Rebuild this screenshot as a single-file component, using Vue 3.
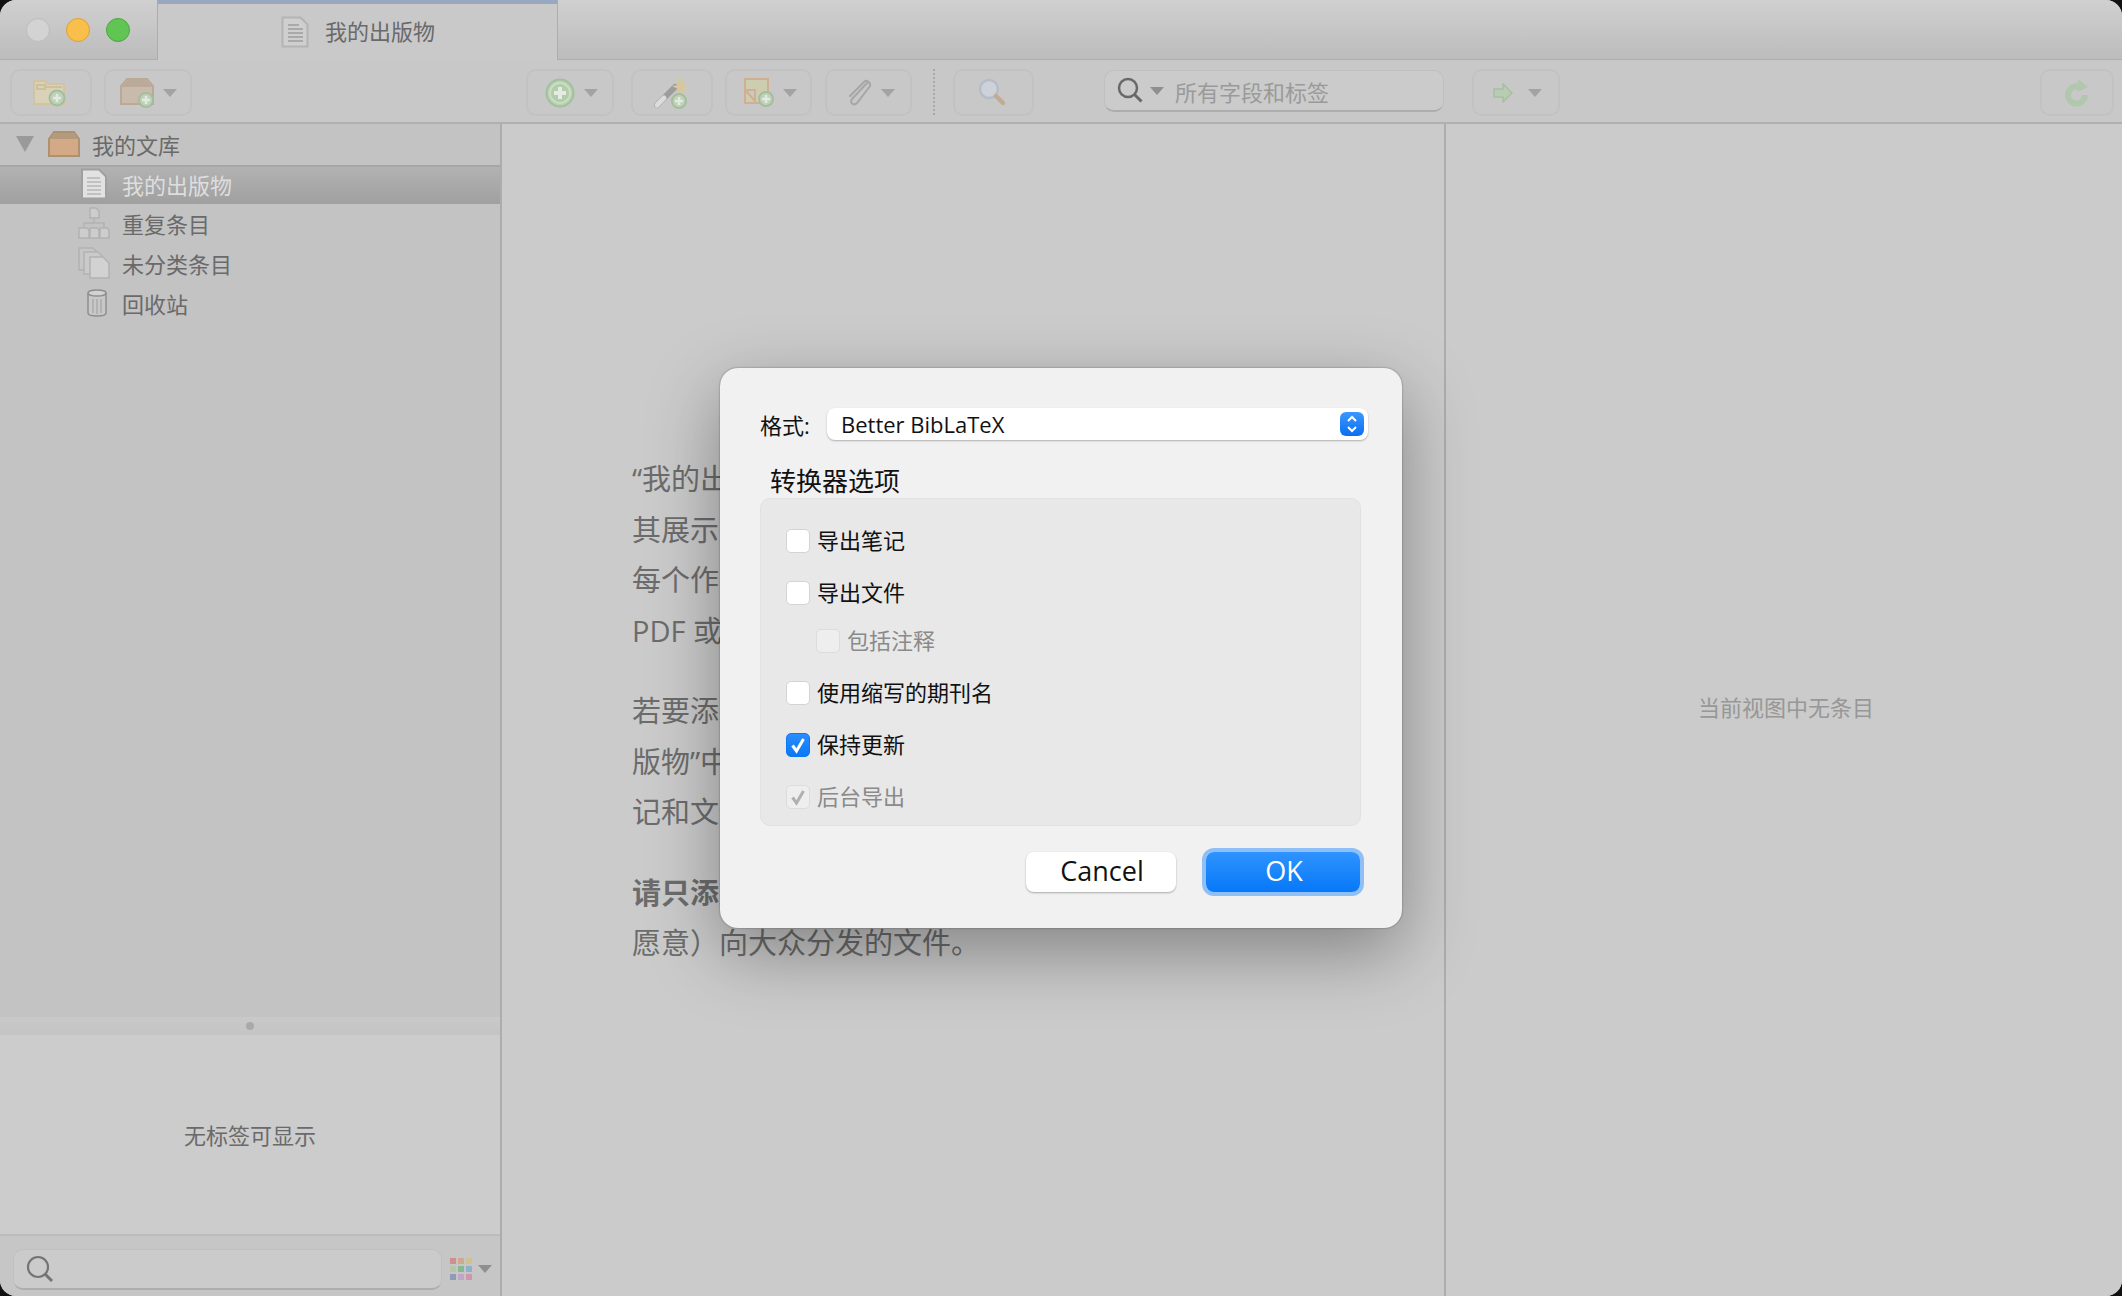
<template>
  <div class="window">
    <!-- 标题栏 -->
    <div class="titlebar">
      <div class="lights">
        <span class="light gray"></span>
        <span class="light yellow"></span>
        <span class="light green"></span>
      </div>
      <div class="tab">
        <svg class="tab-icon" width="28" height="32" viewBox="0 0 28 32">
          <path d="M1.5 1.5h18l7 7v22h-25z" fill="#cfcfcf" stroke="#b4b4b4" stroke-width="2" />
          <path d="M7 9h11M7 13h15M7 17h15M7 21h15M7 25h15" stroke="#a9a9a9" stroke-width="2" />
        </svg>
        <span>我的出版物</span>
      </div>
    </div>

    <!-- 工具栏 -->
    <div class="toolbar">
      <button class="tb-btn w82">
        <svg class="nudge-l" width="34" height="30" viewBox="0 0 34 30">
          <path d="M1 3h11l2 3h17v20H1z" fill="#d9d2b8" stroke="#d3c4a0" stroke-width="2" />
          <path d="M4 7h8v4H4zM12 9h17" fill="none" stroke="#cfc09c" stroke-width="2" />
          <circle cx="24" cy="20" r="7.5" fill="#bfd2b9" stroke="#a5bd9d" stroke-width="2" />
          <path d="M24 16v8M20 20h8" stroke="#e2e9df" stroke-width="2.5" />
        </svg>
      </button>
      <button class="tb-btn w88 ml12">
        <svg width="36" height="30" viewBox="0 0 36 30">
          <path d="M8 1h20l6 7v18H2V8z" fill="#c9bbab" stroke="#b9a998" stroke-width="2" />
          <path d="M3 9l6-7h18l6 7z" fill="#bba999" />
          <circle cx="27" cy="22" r="7" fill="#bfd2b9" stroke="#a5bd9d" stroke-width="2" />
          <path d="M27 18v8M23 22h8" stroke="#e2e9df" stroke-width="2.5" />
        </svg>
        <i class="caret"></i>
      </button>
      <button class="tb-btn w88 ml334 wide-gap">
        <svg width="30" height="30" viewBox="0 0 30 30">
          <circle cx="15" cy="15" r="13.5" fill="#b9d1b1" stroke="#a2c09b" stroke-width="2" />
          <circle cx="15" cy="15" r="10" fill="#b3ccab" stroke="#cfdfca" stroke-width="1.5" />
          <path d="M15 9v12M9 15h12" stroke="#e4ece1" stroke-width="4" />
        </svg>
        <i class="caret"></i>
      </button>
      <button class="tb-btn w82 ml17">
        <svg class="nudge-l" width="36" height="34" viewBox="0 0 36 34">
          <path d="M4 29L22 11" stroke="#9c9c9c" stroke-width="6" stroke-linecap="round" />
          <path d="M4 29l7-7" stroke="#dcdcdc" stroke-width="5" stroke-linecap="round" />
          <path d="M26 1l1 5 5-3-2 6 5 1-5 3 3 5-6-2-3 2 1-5-6-3 6-1-2-6z" fill="#d8c79a" />
          <circle cx="26" cy="25" r="7" fill="#bfd2b9" stroke="#a5bd9d" stroke-width="2" />
          <path d="M26 21v8M22 25h8" stroke="#e2e9df" stroke-width="2.5" />
        </svg>
      </button>
      <button class="tb-btn w87 ml12 wide-gap">
        <svg width="30" height="30" viewBox="0 0 30 30">
          <path d="M1 1h23v24H1z" fill="#cfcdb0" stroke="#cfb092" stroke-width="2" />
          <path d="M1 12h10v13" fill="#c9c9c9" stroke="#cfb092" stroke-width="2" />
          <path d="M2 13l9 10" stroke="#cfb092" stroke-width="2" />
          <circle cx="22" cy="21" r="7" fill="#bfd2b9" stroke="#a5bd9d" stroke-width="2" />
          <path d="M22 17v8M18 21h8" stroke="#e2e9df" stroke-width="2.5" />
        </svg>
        <i class="caret"></i>
      </button>
      <button class="tb-btn w87 ml13 wide-gap">
        <svg width="26" height="28" viewBox="0 0 26 28">
          <path d="M22 4L6 21c-3 4 2 7 5 4L24 8c1-3-3-7-6-4L4 18" fill="none" stroke="#a7a7a7" stroke-width="2" stroke-linecap="round" transform="translate(0 -1)" />
        </svg>
        <i class="caret"></i>
      </button>
      <div class="tb-sep"></div>
      <button class="tb-btn w81 ml18">
        <svg class="nudge-l" width="30" height="30" viewBox="0 0 30 30">
          <circle cx="11" cy="11" r="9" fill="#cdd2da" stroke="#b6bdc8" stroke-width="2.5" />
          <path d="M18 18l7 7" stroke="#c2ab96" stroke-width="4.5" stroke-linecap="round" />
        </svg>
      </button>
      <div class="search-box">
        <svg class="search-icon" width="27" height="27" viewBox="0 0 27 27">
          <circle cx="11" cy="11" r="9" fill="none" stroke="#686868" stroke-width="2.5" />
          <path d="M17.5 17.5l7 7" stroke="#686868" stroke-width="3" />
        </svg>
        <i class="caret dark"></i>
        <span class="placeholder">所有字段和标签</span>
      </div>
      <button class="tb-btn w88 ml28 arrow-btn">
        <svg width="20" height="20" viewBox="0 0 20 20">
          <path d="M1 6h9V1l9 9-9 9v-5H1z" fill="#b8ccb3" stroke="#a6c09f" stroke-width="1.5" />
        </svg>
        <i class="caret"></i>
      </button>
      <button class="tb-btn w74 push">
        <svg width="28" height="30" viewBox="0 0 28 30">
          <path d="M19.5 11a8.5 8.5 0 1 0 2.5 6" fill="none" stroke="#b2c8ae" stroke-width="6" />
          <path d="M15 1l10 8-11 5z" fill="#b2c8ae" />
        </svg>
      </button>
    </div>

    <div class="content">
      <!-- 左侧栏 -->
      <aside class="sidebar">
        <div class="tree">
          <div class="tree-row top">
            <i class="twisty"></i>
            <svg class="lib-icon" width="32" height="26" viewBox="0 0 32 26">
              <path d="M6 1h20l5 7v17H1V8z" fill="#d4aa86" stroke="#ae9170" stroke-width="2" />
              <path d="M2 8l5-6h18l5 6z" fill="#b39a7d" />
            </svg>
            <span>我的文库</span>
          </div>
          <div v-for="item in treeItems" :key="item.label" class="tree-row child" :class="{ selected: item.selected }">
            <span class="tree-icon">
              <svg v-if="item.icon === 'doc'" width="28" height="32" viewBox="0 0 28 32">
                <path d="M2 1.5h17l7 7v22H2z" fill="#e2e2e2" stroke="#a0a0a0" stroke-width="2" />
                <path d="M7 10h13M7 14h14M7 18h14M7 22h14M7 26h14" stroke="#b6b6b6" stroke-width="1.5" />
              </svg>
              <svg v-else-if="item.icon === 'dup'" width="32" height="32" viewBox="0 0 32 32">
                <path d="M12 1h6l3 3v7h-9z" fill="#cdcdcd" stroke="#b2b2b2" stroke-width="1.5" />
                <path d="M16 11v5M6 20v-4h20v4" fill="none" stroke="#b2b2b2" stroke-width="1.5" />
                <path d="M1 21h8l2 2v8H1zM12 21h7l2 2v8h-9zM22 21h7l2 2v8h-9z" fill="#cdcdcd" stroke="#b2b2b2" stroke-width="1.5" />
              </svg>
              <svg v-else-if="item.icon === 'unfiled'" width="32" height="32" viewBox="0 0 32 32">
                <path d="M1 1h14l4 4v18H1z" fill="#c6c6c6" stroke="#b2b2b2" stroke-width="1.5" />
                <path d="M6 5h14l4 4v18H6z" fill="#cacaca" stroke="#b2b2b2" stroke-width="1.5" />
                <path d="M12 10h13l6 6v15H12z" fill="#d2d2d2" stroke="#b2b2b2" stroke-width="1.5" />
              </svg>
              <svg v-else class="trash" width="20" height="28" viewBox="0 0 20 28">
                <path d="M1 4v20c0 4 18 4 18 0V4" fill="#c8c8c8" stroke="#8e8e8e" stroke-width="1.5" />
                <ellipse cx="10" cy="4" rx="9" ry="3" fill="#d2d2d2" stroke="#8e8e8e" stroke-width="1.5" />
                <path d="M6 10v14M10 10v15M14 10v14" stroke="#aaaaaa" stroke-width="1.5" />
              </svg>
            </span>
            <span>{{ item.label }}</span>
          </div>
        </div>
        <div class="splitter"><i class="grip"></i></div>
        <div class="tag-pane">无标签可显示</div>
        <div class="tag-footer">
          <div class="tag-search">
            <svg width="28" height="28" viewBox="0 0 28 28">
              <circle cx="12" cy="12" r="10" fill="none" stroke="#747474" stroke-width="2.2" />
              <path d="M19 19l7 7" stroke="#747474" stroke-width="3" />
            </svg>
          </div>
          <div class="swatches">
            <i v-for="c in swatches" :key="c" :style="{ background: c }"></i>
          </div>
          <i class="caret dark small-gap"></i>
        </div>
      </aside>

      <!-- 中间说明 -->
      <main class="intro">
        <p>“我的出版物”中添加您自己的作品，并将<br>其展示在您的 zotero.org 个人资料页面。<br>每个作品可以附带摘要，也可以直接发布<br>PDF 或其他文件。</p>
        <p>若要添加条目，请将其拖放到“我的出<br>版物”中，您可以选择是否同时发布笔<br>记和文件。</p>
        <p><b>请只添加您自己创作的作品，</b>并且只包括您有权（且<br>愿意）向大众分发的文件。</p>
      </main>

      <!-- 右侧 -->
      <section class="detail">当前视图中无条目</section>
    </div>

    <!-- 导出弹窗 -->
    <div class="overlay">
      <div class="dialog">
        <div class="format-row">
          <label class="format-label">格式:</label>
          <div class="select">
            <span>Better BibLaTeX</span>
            <span class="stepper">
              <svg width="12" height="20" viewBox="0 0 12 20">
                <path d="M2 7l4-4 4 4M2 13l4 4 4-4" fill="none" stroke="#fff" stroke-width="2" />
              </svg>
            </span>
          </div>
        </div>
        <div class="legend">转换器选项</div>
        <div class="group">
          <div v-for="opt in options" :key="opt.label" class="option" :class="{ sub: opt.sub, disabled: opt.disabled }">
            <span class="check" :class="{ on: opt.checked }">
              <svg v-if="opt.checked" width="18" height="18" viewBox="0 0 18 18">
                <path d="M3.5 9.5l4 5.5 7-12" fill="none" stroke="currentColor" stroke-width="3" />
              </svg>
            </span>
            <span class="opt-label">{{ opt.label }}</span>
          </div>
        </div>
        <div class="actions">
          <button class="btn cancel">Cancel</button>
          <button class="btn ok">OK</button>
        </div>
      </div>
    </div>
  </div>
</template>

<script setup>
const treeItems = [
  { label: '我的出版物', icon: 'doc', selected: true },
  { label: '重复条目', icon: 'dup' },
  { label: '未分类条目', icon: 'unfiled' },
  { label: '回收站', icon: 'trash' }
]

const swatches = [
  '#d08f8f', '#d0a890', '#cfc28f',
  '#b7c6a8', '#85b98f', '#8fb0cc',
  '#8f9cb8', '#bda8c8', '#d095ae'
]

const options = [
  { label: '导出笔记' },
  { label: '导出文件' },
  { label: '包括注释', sub: true, disabled: true },
  { label: '使用缩写的期刊名' },
  { label: '保持更新', checked: true },
  { label: '后台导出', checked: true, disabled: true }
]
</script>

<style>
html, body {
  margin: 0;
  background: #111;
}
</style>

<style scoped>
.window {
  position: relative;
  width: 2122px;
  height: 1296px;
  display: flex;
  flex-direction: column;
  overflow: hidden;
  border-radius: 16px;
  background: #cbcbcb;
  color: #6a6a6a;
  font-family: "Open Sans", "Noto Sans CJK SC", sans-serif;
  font-size: 22px;
}

/* 标题栏 */
.titlebar {
  height: 60px;
  box-sizing: border-box;
  display: flex;
  background: linear-gradient(#d0d0d0, #bcbcbc);
  border-bottom: 1px solid #aeaeae;
  flex: none;
}

.lights {
  width: 157px;
  display: flex;
  align-items: center;
  gap: 16px;
  padding-left: 26px;
  box-sizing: border-box;
  flex: none;
}

.light {
  width: 24px;
  height: 24px;
  border-radius: 50%;
  box-sizing: border-box;
}

.light.gray { background: #d3d3d3; border: 1px solid #bcbcbc; }
.light.yellow { background: #f9bf4b; border: 1px solid #dda22f; }
.light.green { background: #61c554; border: 1px solid #4aa83e; }

.tab {
  width: 401px;
  height: 60px;
  box-sizing: border-box;
  display: flex;
  align-items: center;
  gap: 16px;
  padding: 0 0 3px 123px;
  background: #c9c9c9;
  border-top: 4px solid #98a8c0;
  border-left: 1px solid #adadad;
  border-right: 1px solid #adadad;
  line-height: 1;
}

.tab-icon { margin-top: 2px; }

/* 工具栏 */
.toolbar {
  height: 64px;
  box-sizing: border-box;
  display: flex;
  align-items: flex-start;
  padding: 9px 8px 0 10px;
  background: #c8c8c8;
  border-bottom: 2px solid #b0b0b0;
  flex: none;
}

.tb-btn {
  height: 47px;
  box-sizing: border-box;
  display: flex;
  align-items: center;
  justify-content: center;
  gap: 8px;
  padding: 0;
  background: transparent;
  border: 2px solid #c2c2c2;
  border-radius: 10px;
}

.tb-btn.wide-gap { gap: 9px; padding-left: 3px; }
.tb-btn.arrow-btn { gap: 15px; padding-left: 3px; }
.nudge-l { margin-right: 2px; }

.w74 { width: 74px; }
.w81 { width: 81px; }
.w82 { width: 82px; }
.w87 { width: 87px; }
.w88 { width: 88px; }
.ml12 { margin-left: 12px; }
.ml13 { margin-left: 13px; }
.ml17 { margin-left: 17px; }
.ml18 { margin-left: 18px; }
.ml28 { margin-left: 28px; }
.ml334 { margin-left: 334px; }
.push { margin-left: auto; }

.caret {
  display: block;
  width: 0;
  height: 0;
  border-left: 7px solid transparent;
  border-right: 7px solid transparent;
  border-top: 8px solid #a3a3a3;
}

.caret.dark { border-top-color: #8f8f8f; }

.tb-sep {
  width: 0;
  height: 46px;
  margin-left: 21px;
  border-left: 2px dotted #a8a8a8;
}

.search-box {
  width: 340px;
  height: 42px;
  margin: 1px 0 0 70px;
  box-sizing: border-box;
  display: flex;
  align-items: center;
  padding-left: 12px;
  background: #cbcbcb;
  border: 1px solid #c0c0c0;
  border-bottom: 2px solid #adadad;
  border-radius: 10px;
}

.search-icon { margin-right: 6px; }

.placeholder {
  margin: 0 0 0 11px;
  color: #9a9a9a;
}

/* 主体 */
.content {
  flex: 1;
  min-height: 0;
  display: flex;
}

.sidebar {
  width: 502px;
  box-sizing: border-box;
  flex: none;
  display: flex;
  flex-direction: column;
  border-right: 2px solid #adadad;
}

.tree {
  flex: 1;
  background: #c3c3c3;
}

.tree-row {
  height: 40px;
  box-sizing: border-box;
  padding-bottom: 2px;
  display: flex;
  align-items: center;
}

.tree-row.top {
  height: 41px;
  padding-left: 16px;
}

.twisty {
  width: 0;
  height: 0;
  border-left: 9px solid transparent;
  border-right: 9px solid transparent;
  border-top: 16px solid #9a9a9a;
  margin-right: 14px;
}

.lib-icon { margin-right: 12px; }

.tree-row.child { padding-left: 78px; }

.tree-row.selected {
  height: 39px;
  background: linear-gradient(#b2b2b2, #a0a0a0);
  border-top: 2px solid #a6a6a6;
  padding-bottom: 4px;
  color: #dedede;
}

.tree-icon {
  width: 32px;
  height: 32px;
  margin-right: 12px;
  display: flex;
  align-items: center;
  justify-content: center;
}

.trash { margin-left: 6px; }

.splitter {
  height: 18px;
  display: flex;
  align-items: center;
  justify-content: center;
  background: linear-gradient(#c9c9c9, #c4c4c4);
}

.grip {
  width: 8px;
  height: 8px;
  border-radius: 50%;
  background: #a9a9a9;
}

.tag-pane {
  height: 201px;
  box-sizing: border-box;
  padding-bottom: 2px;
  display: flex;
  align-items: center;
  justify-content: center;
  background: #cccccc;
  border-bottom: 2px solid #bcbcbc;
}

.tag-footer {
  height: 60px;
  box-sizing: border-box;
  padding: 6px 0 0 13px;
  display: flex;
  align-items: center;
  background: #c6c6c6;
}

.tag-search {
  width: 429px;
  height: 41px;
  box-sizing: border-box;
  display: flex;
  align-items: center;
  padding-left: 12px;
  background: #cbcbcb;
  border: 1px solid #c0c0c0;
  border-bottom: 2px solid #adadad;
  border-radius: 10px;
}

.swatches {
  width: 22px;
  margin-left: 8px;
  display: grid;
  grid-template-columns: repeat(3, 6px);
  gap: 2px;
}

.swatches i {
  height: 6px;
}

.small-gap { margin-left: 6px; }

.intro {
  flex: 1;
  padding: 330px 0 0 130px;
  background: #cbcbcb;
  font-size: 29px;
  line-height: 50.5px;
  color: #6c6c6c;
  white-space: nowrap;
}

.intro p {
  margin: 0 0 30px;
}

.detail {
  width: 678px;
  box-sizing: border-box;
  flex: none;
  display: flex;
  align-items: center;
  justify-content: center;
  padding: 0 0 8px 4px;
  border-left: 2px solid #adadad;
  background: #cbcbcb;
  color: #979797;
}

/* 弹窗 */
.overlay {
  position: absolute;
  inset: 0;
  display: flex;
  justify-content: center;
  align-items: flex-start;
  padding-top: 368px;
  box-sizing: border-box;
}

.dialog {
  width: 682px;
  height: 560px;
  box-sizing: border-box;
  padding: 40px 34px 0 40px;
  background: #f1f1f1;
  border-radius: 18px;
  box-shadow: 0 24px 70px rgba(0, 0, 0, 0.35), 0 0 2px rgba(0, 0, 0, 0.45);
  color: #111;
}

.format-row {
  display: flex;
  align-items: center;
  height: 32px;
}

.format-label {
  width: 67px;
}

.select {
  flex: 1;
  height: 32px;
  box-sizing: border-box;
  display: flex;
  align-items: center;
  justify-content: space-between;
  padding: 0 4px 0 14px;
  background: #fff;
  border-radius: 8px;
  box-shadow: 0 1px 2px rgba(0, 0, 0, 0.28);
}

.stepper {
  width: 24px;
  height: 24px;
  display: flex;
  align-items: center;
  justify-content: center;
  border-radius: 6px;
  background: linear-gradient(#3b97ff, #0a6ff0);
}

.legend {
  margin: 23px 0 0 10px;
  height: 35px;
  font-size: 26px;
  line-height: 36px;
}

.group {
  margin-right: 7px;
  height: 328px;
  box-sizing: border-box;
  display: flex;
  flex-direction: column;
  gap: 28px;
  padding: 30px 0 0 25px;
  background: #e8e8e8;
  border: 1px solid #e1e1e1;
  border-radius: 10px;
}

.option {
  height: 24px;
  display: flex;
  align-items: center;
  gap: 7px;
  line-height: 24px;
}

.opt-label { margin-top: -2px; }

.option.sub {
  margin: -4px 0 0 30px;
}

.check {
  width: 24px;
  height: 24px;
  box-sizing: border-box;
  display: flex;
  align-items: center;
  justify-content: center;
  background: #fff;
  border: 1px solid #d4d4d4;
  border-radius: 5px;
  color: #fff;
}

.check.on {
  background: linear-gradient(#2a8dff, #0a78f5);
  border-color: #0a78f5;
}

.option.disabled { color: #8a8a8a; }

.option.disabled .check {
  background: #eeeeee;
  border-color: #dcdcdc;
  color: #b0b0b0;
}

.actions {
  display: flex;
  justify-content: flex-end;
  gap: 30px;
  margin: 26px 8px 0 0;
}

.btn {
  height: 40px;
  box-sizing: border-box;
  padding: 0 0 2px 2px;
  border: none;
  border-radius: 8px;
  font-family: "Open Sans", sans-serif;
  font-size: 27px;
  line-height: 36px;
}

.cancel {
  width: 150px;
  background: #fff;
  color: #111;
  box-shadow: 0 1px 2px rgba(0, 0, 0, 0.3);
}

.ok {
  width: 154px;
  background: linear-gradient(#2f93ff, #0778f8);
  color: #fff;
  box-shadow: 0 0 0 4px rgba(90, 165, 250, 0.65);
}
</style>
